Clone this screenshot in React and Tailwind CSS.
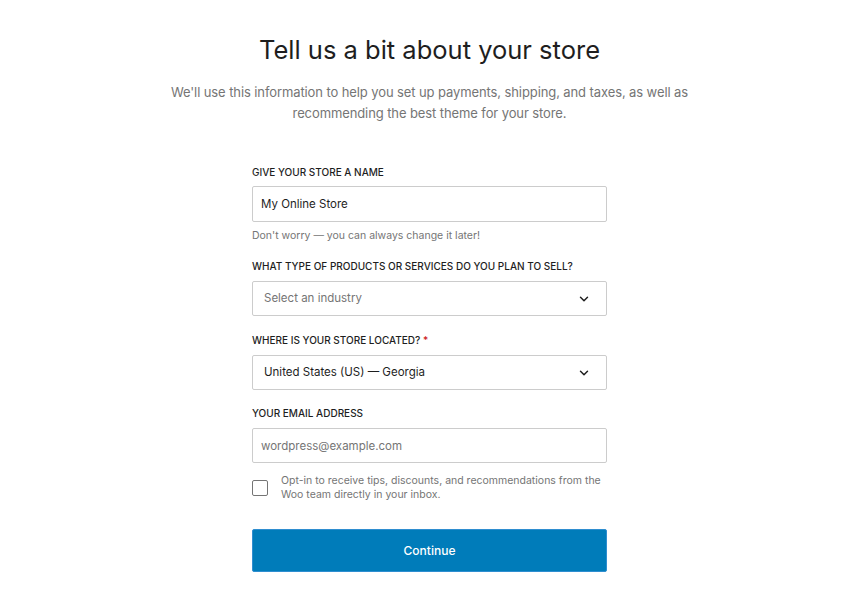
import { useState } from "react";
import { ChevronDown } from "lucide-react";

export default function App() {
  const [optIn, setOptIn] = useState(false);

  return (
    <div className="min-h-[605px] w-full bg-white font-['Inter','Liberation_Sans',sans-serif] text-[#1e1e1e]">
      <div className="flex flex-col items-center pl-[14px] pt-[33px]">
        {/* ── Header ── */}
        <h1 className="text-[25.5px] leading-[34px] font-normal text-[#1e1e1e]">
          Tell us a bit about your store
        </h1>
        <p className="mt-[15px] max-w-[540px] text-center text-[13px] leading-[21px] tracking-[-0.1px] text-[#757575]">
          We'll use this information to help you set up payments, shipping, and taxes, as well as
          recommending the best theme for your store.
        </p>

        {/* ── Form ── */}
        <form className="mt-[41px] flex w-[355px] flex-col" onSubmit={(e) => e.preventDefault()}>
          <Label className="!mb-[7px]">Give your store a name</Label>
          <input
            defaultValue="My Online Store"
            className="h-[36px] w-full rounded-[2px] border border-[#cccccc] px-[8px] text-[11.5px] text-[#1e1e1e] outline-none"
          />
          <p className="mt-[7px] text-[10.5px] leading-[14px] text-[#757575]">
            Don't worry — you can always change it later!
          </p>

          <Label className="mt-[16px]">What type of products or services do you plan to sell?</Label>
          <SelectBox value="Select an industry" placeholder />

          <Label className="mt-[17px]">
            Where is your store located? <span className="text-[#cc1818]">*</span>
          </Label>
          <SelectBox value="United States (US) — Georgia" />

          <Label className="mt-[16px]">Your email address</Label>
          <input
            placeholder="wordpress@example.com"
            className="h-[35px] w-full rounded-[2px] border border-[#cccccc] px-[8px] text-[11.5px] text-[#1e1e1e] outline-none placeholder:text-[#757575]"
          />

          <label className="mt-[11px] flex cursor-pointer items-center gap-[13px]">
            <span
              onClick={() => setOptIn((o) => !o)}
              className="h-[16px] w-[16px] flex-shrink-0 rounded-[2px] border border-[#757575] bg-white"
            />
            <span className="text-[10.5px] leading-[14px] text-[#757575]">
              Opt-in to receive tips, discounts, and recommendations from the Woo team directly in
              your inbox.
            </span>
          </label>

          <button
            type="submit"
            className="mt-[27px] h-[43px] w-full rounded-[2px] border border-[#2f8ed0] bg-[#007cba] text-[12px] font-medium text-white"
          >
            Continue
          </button>
        </form>
      </div>
    </div>
  );
}

function Label({ children, className = "" }) {
  return (
    <div className={`mb-[8px] text-[10px] leading-[14px] font-medium uppercase text-[#1e1e1e] ${className}`}>
      {children}
    </div>
  );
}

function SelectBox({ value, placeholder = false }) {
  return (
    <div className="flex h-[35px] w-full items-center justify-between rounded-[2px] border border-[#cccccc] pl-[11px] pr-[15px]">
      <span className={`text-[11.5px] ${placeholder ? "text-[#757575]" : "text-[#1e1e1e]"}`}>{value}</span>
      <ChevronDown size={14} strokeWidth={2.5} className="text-[#1e1e1e]" />
    </div>
  );
}
